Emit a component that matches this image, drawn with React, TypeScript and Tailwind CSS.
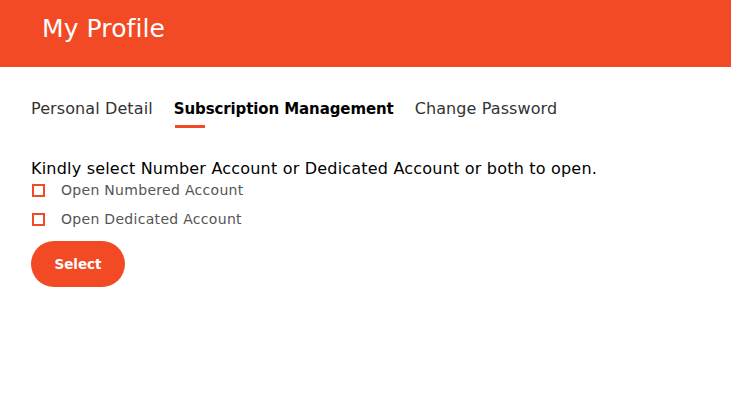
import { useState } from 'react';
import clsx from 'clsx';

const tabs = ['Personal Detail', 'Subscription Management', 'Change Password'];

export default function App() {
  const [active, setActive] = useState(1);
  const [checks, setChecks] = useState([false, false]);

  const options = ['Open Numbered Account', 'Open Dedicated Account'];

  return (
    <div
      className="min-h-[417px] w-full bg-white"
      style={{ fontFamily: '"DejaVu Sans", "Open Sans", sans-serif' }}
    >
      <header className="flex h-[67px] items-center bg-[#f24a25] pl-[42px]">
        <h1 className="pb-[10px] text-[25px] font-normal tracking-[0.1px] text-white">
          My Profile
        </h1>
      </header>

      <div className="px-[31px]">
        <nav className="mt-[32px] flex gap-[21px]">
          {tabs.map((tab, i) => (
            <button
              key={tab}
              onClick={() => setActive(i)}
              className={clsx(
                'flex flex-col items-start leading-[20px]',
                i === active
                  ? 'text-[15px] font-bold tracking-[-0.1px] text-black'
                  : 'text-[16px] tracking-[0.1px] text-[#333]'
              )}
            >
              {tab}
              <span
                className={clsx(
                  'ml-px mt-[6px] h-[3px] w-[30px]',
                  i === active ? 'bg-[#f24a25]' : 'bg-transparent'
                )}
              />
            </button>
          ))}
        </nav>

        <p className="mt-[32px] text-[16px] leading-[18px] tracking-[0.2px] text-black">
          Kindly select Number Account or Dedicated Account or both to open.
        </p>

        <div className="mt-[2px] flex flex-col gap-[9px]">
          {options.map((opt, i) => (
            <label key={opt} className="flex cursor-pointer items-center">
              <span
                onClick={() => setChecks(checks.map((c, j) => (j === i ? !c : c)))}
                className="ml-px block h-[13px] w-[13px] border-2 border-[#f24a25]"
              />
              <span className="ml-[16px] text-[14px] leading-[20px] tracking-[0.3px] text-[#555]">
                {opt}
              </span>
            </label>
          ))}
        </div>

        <button className="mt-[12px] h-[46px] w-[94px] rounded-full bg-[#f24a25] text-[13.5px] font-bold text-white">
          Select
        </button>
      </div>
    </div>
  );
}
